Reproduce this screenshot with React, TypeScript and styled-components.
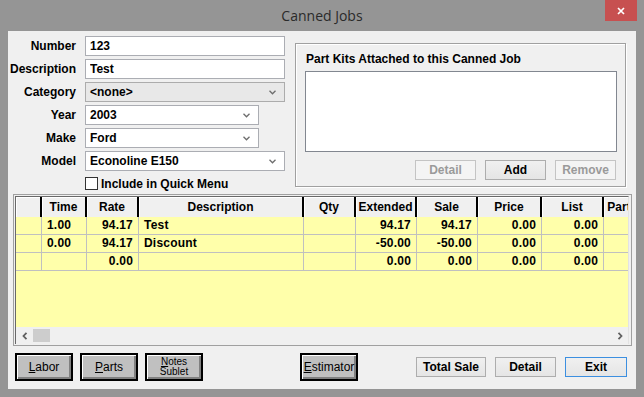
import styled, { createGlobalStyle } from "styled-components";

const GlobalStyle = createGlobalStyle`
  html, body {
    margin: 0;
    padding: 0;
    background: #959595;
  }
  body {
    font-family: "Liberation Sans", Arial, sans-serif;
    color: #000;
  }
`;

const Window = styled.div`
  width: 644px;
  height: 397px;
  box-sizing: border-box;
  background: #959595;
  padding: 0 8px 8px;
  display: flex;
  flex-direction: column;
`;

const TitleBar = styled.div`
  height: 31px;
  flex-shrink: 0;
  display: grid;
  grid-template-columns: 1fr auto 1fr;
`;

const Title = styled.div`
  grid-column: 2;
  align-self: center;
  font-family: "Open Sans", "Noto Sans", sans-serif;
  font-size: 14px;
  color: #2a2a2a;
`;

const CloseButton = styled.div`
  grid-column: 3;
  justify-self: end;
  width: 32px;
  height: 21px;
  margin-right: -1px;
  background: #c75050;
  display: flex;
  align-items: center;
  justify-content: center;
`;

const Client = styled.div`
  flex: 1;
  background: #f0f0f0;
  display: flex;
  flex-direction: column;
`;

const TopSection = styled.div`
  height: 163px;
  flex-shrink: 0;
  display: flex;
  align-items: flex-start;
`;

const Form = styled.div`
  display: grid;
  grid-template-columns: 69px 200px;
  grid-auto-rows: 20px;
  column-gap: 8px;
  row-gap: 3px;
  padding-top: 5px;
`;

const Label = styled.div`
  align-self: center;
  text-align: right;
  padding-right: 1px;
  font-size: 12px;
  font-weight: bold;
`;

const TextInput = styled.input`
  box-sizing: border-box;
  width: 100%;
  height: 20px;
  margin: 0;
  padding: 0 4px;
  border: 1px solid #abadb3;
  background: #fff;
  font-family: "Liberation Sans", Arial, sans-serif;
  font-size: 12px;
  font-weight: bold;
  color: #000;
  outline: none;
`;

const SelectBox = styled.div<{ $width: number; $grey?: boolean }>`
  box-sizing: border-box;
  width: ${(p) => p.$width}px;
  height: 20px;
  padding: 0 8px 0 4px;
  border: 1px solid ${(p) => (p.$grey ? "#acacac" : "#abadb3")};
  background: ${(p) => (p.$grey ? "#e8e8e8" : "#fff")};
  display: flex;
  align-items: center;
  justify-content: space-between;
  font-size: 12px;
  font-weight: bold;
`;

const CheckRow = styled.label`
  grid-column: 2;
  margin-top: 3px;
  height: 13px;
  display: flex;
  align-items: center;
  gap: 3px;
  font-size: 12px;
  font-weight: bold;
`;

const CheckBox = styled.span`
  box-sizing: border-box;
  width: 13px;
  height: 13px;
  border: 1px solid #333;
  background: #fff;
`;

const GroupBox = styled.div`
  box-sizing: border-box;
  width: 331px;
  height: 144px;
  margin: 12px 0 0 10px;
  padding: 8px 8px 0 9px;
  border: 1px solid #a0a0a0;
  box-shadow: inset 1px 1px 0 #fff, 1px 1px 0 #fff;
  display: flex;
  flex-direction: column;
`;

const GroupTitle = styled.div`
  font-size: 12px;
  font-weight: bold;
  line-height: 14px;
  margin: 0 0 5px 1px;
`;

const ListBox = styled.div`
  box-sizing: border-box;
  width: 312px;
  height: 81px;
  border: 1px solid #828790;
  background: #fff;
`;

const GroupButtons = styled.div`
  margin-top: 8px;
  padding-right: 1px;
  display: flex;
  justify-content: flex-end;
  gap: 9px;
`;

const FlatButton = styled.button<{ $width: number; $default?: boolean }>`
  box-sizing: border-box;
  width: ${(p) => p.$width}px;
  height: 20px;
  margin: 0;
  padding: 0;
  border: 1px solid ${(p) => (p.$default ? "#3c8fe0" : "#adadad")};
  background: linear-gradient(#f0f0f0, #e5e5e5);
  font-family: "Liberation Sans", Arial, sans-serif;
  font-size: 12px;
  font-weight: bold;
  color: #000;

  &:disabled {
    border-color: #c4c4c4;
    background: #f4f4f4;
    color: #9a9a9a;
  }
`;

const GridFrame = styled.div`
  box-sizing: border-box;
  height: 152px;
  margin: 0 4px 0 5px;
  padding: 1px 2px 1px 1px;
  border: 1px solid #a0a0a0;
  display: flex;
  flex-direction: column;
`;

const GridInner = styled.div`
  flex: 1;
  min-height: 0;
  border-top: 1px solid #696969;
  border-left: 1px solid #696969;
  border-right: 1px solid #e3e3e3;
  display: flex;
  flex-direction: column;
`;

const Viewport = styled.div`
  flex: 1;
  min-height: 0;
  overflow: hidden;
  background: #ffffaa;
`;

const Row = styled.div`
  display: flex;
`;

const HeaderCell = styled.div<{ $w: number }>`
  box-sizing: border-box;
  flex: 0 0 ${(p) => p.$w}px;
  height: 20px;
  line-height: 20px;
  text-align: center;
  white-space: nowrap;
  background: #f0f0f0;
  border-right: 2px solid #000;
  box-shadow: inset 1px 1px 0 #fff;
  font-size: 12px;
  font-weight: bold;
`;

const Cell = styled.div<{ $w: number; $align: string }>`
  box-sizing: border-box;
  flex: 0 0 ${(p) => p.$w}px;
  height: 18px;
  line-height: 17px;
  padding: 0 5px;
  text-align: ${(p) => p.$align};
  white-space: nowrap;
  border-right: 1px solid #c0c0c0;
  border-bottom: 1px solid #c0c0c0;
  font-size: 12px;
  font-weight: bold;
  letter-spacing: 0.2px;
`;

const HScroll = styled.div`
  height: 17px;
  flex-shrink: 0;
  background: #f0f0f0;
  display: flex;
  align-items: center;
`;

const ScrollArrow = styled.div`
  width: 17px;
  height: 17px;
  display: flex;
  align-items: center;
  justify-content: center;
`;

const ScrollThumb = styled.div`
  width: 17px;
  height: 13px;
  background: #cdcdcd;
`;

const ScrollTrack = styled.div`
  flex: 1;
`;

const BottomBar = styled.div`
  height: 28px;
  margin-top: 7px;
  padding: 0 9px 0 7px;
  display: flex;
  align-items: center;
`;

const LegacyGroup = styled.div`
  display: flex;
  gap: 7px;
`;

const LegacyButton = styled.button<{ $small?: boolean; $offset?: number }>`
  box-sizing: border-box;
  width: 58px;
  height: 28px;
  margin: 0 0 0 ${(p) => p.$offset ?? 0}px;
  padding: 0 0 1px;
  border: 2px solid #000;
  background: #c0c0c0;
  box-shadow: inset 1px 1px 0 #fff, inset -1px -1px 0 #808080,
    inset -2px -2px 0 #808080;
  font-family: "Liberation Sans", Arial, sans-serif;
  font-size: ${(p) => (p.$small ? 10 : 12)}px;
  line-height: ${(p) => (p.$small ? 10 : 14)}px;
  color: #000;
`;

const RightGroup = styled.div`
  margin-left: auto;
  display: flex;
  gap: 9px;
`;

const columns = [
  { title: "", w: 26, align: "left" },
  { title: "Time", w: 45, align: "left" },
  { title: "Rate", w: 52, align: "right" },
  { title: "Description", w: 165, align: "left" },
  { title: "Qty", w: 52, align: "right" },
  { title: "Extended", w: 61, align: "right" },
  { title: "Sale", w: 61, align: "right" },
  { title: "Price", w: 64, align: "right" },
  { title: "List", w: 62, align: "right" },
  { title: "Part Cost", w: 62, align: "right" },
];

const rows = [
  ["", "1.00", "94.17", "Test", "", "94.17", "94.17", "0.00", "0.00", ""],
  ["", "0.00", "94.17", "Discount", "", "-50.00", "-50.00", "0.00", "0.00", ""],
  ["", "", "0.00", "", "", "0.00", "0.00", "0.00", "0.00", ""],
];

const Chevron = () => (
  <svg width="7" height="5" viewBox="0 0 7 5">
    <polyline points="0.5,0.8 3.5,3.8 6.5,0.8" fill="none" stroke="#6d6d6d" strokeWidth="1.3" />
  </svg>
);

const Arrow = ({ dir }: { dir: "left" | "right" }) => (
  <svg width="6" height="8" viewBox="0 0 6 8">
    <polyline
      points={dir === "left" ? "4.5,0.8 1.5,4 4.5,7.2" : "1.5,0.8 4.5,4 1.5,7.2"}
      fill="none"
      stroke="#606060"
      strokeWidth="1.8"
    />
  </svg>
);

export default function App() {
  return (
    <>
      <GlobalStyle />
      <Window>
        <TitleBar>
          <Title>Canned Jobs</Title>
          <CloseButton>
            <svg width="8" height="8" viewBox="0 0 8 8">
              <path d="M1 1L7 7M7 1L1 7" stroke="#fff" strokeWidth="1.7" />
            </svg>
          </CloseButton>
        </TitleBar>
        <Client>
          <TopSection>
            <Form>
              <Label>Number</Label>
              <TextInput defaultValue="123" />
              <Label>Description</Label>
              <TextInput defaultValue="Test" />
              <Label>Category</Label>
              <SelectBox $width={200} $grey>
                {"<none>"}
                <Chevron />
              </SelectBox>
              <Label>Year</Label>
              <SelectBox $width={174}>
                2003
                <Chevron />
              </SelectBox>
              <Label>Make</Label>
              <SelectBox $width={174}>
                Ford
                <Chevron />
              </SelectBox>
              <Label>Model</Label>
              <SelectBox $width={200}>
                Econoline E150
                <Chevron />
              </SelectBox>
              <CheckRow>
                <CheckBox />
                Include in Quick Menu
              </CheckRow>
            </Form>
            <GroupBox>
              <GroupTitle>Part Kits Attached to this Canned Job</GroupTitle>
              <ListBox />
              <GroupButtons>
                <FlatButton $width={61} disabled>
                  Detail
                </FlatButton>
                <FlatButton $width={61}>Add</FlatButton>
                <FlatButton $width={61} disabled>
                  Remove
                </FlatButton>
              </GroupButtons>
            </GroupBox>
          </TopSection>

          <GridFrame>
            <GridInner>
              <Viewport>
                <Row>
                  {columns.map((c, i) => (
                    <HeaderCell key={i} $w={c.w}>
                      {c.title}
                    </HeaderCell>
                  ))}
                </Row>
                {rows.map((r, ri) => (
                  <Row key={ri}>
                    {r.map((v, ci) => (
                      <Cell key={ci} $w={columns[ci].w} $align={columns[ci].align}>
                        {v}
                      </Cell>
                    ))}
                  </Row>
                ))}
              </Viewport>
              <HScroll>
                <ScrollArrow>
                  <Arrow dir="left" />
                </ScrollArrow>
                <ScrollThumb />
                <ScrollTrack />
                <ScrollArrow>
                  <Arrow dir="right" />
                </ScrollArrow>
              </HScroll>
            </GridInner>
          </GridFrame>

          <BottomBar>
            <LegacyGroup>
              <LegacyButton>
                <u>L</u>abor
              </LegacyButton>
              <LegacyButton>
                <u>P</u>arts
              </LegacyButton>
              <LegacyButton $small>
                <u>N</u>otes
                <br />
                Sublet
              </LegacyButton>
            </LegacyGroup>
            <LegacyButton $offset={97}>
              <u>E</u>stimator
            </LegacyButton>
            <RightGroup>
              <FlatButton $width={70}>Total Sale</FlatButton>
              <FlatButton $width={61}>Detail</FlatButton>
              <FlatButton $width={62} $default>
                Exit
              </FlatButton>
            </RightGroup>
          </BottomBar>
        </Client>
      </Window>
    </>
  );
}
